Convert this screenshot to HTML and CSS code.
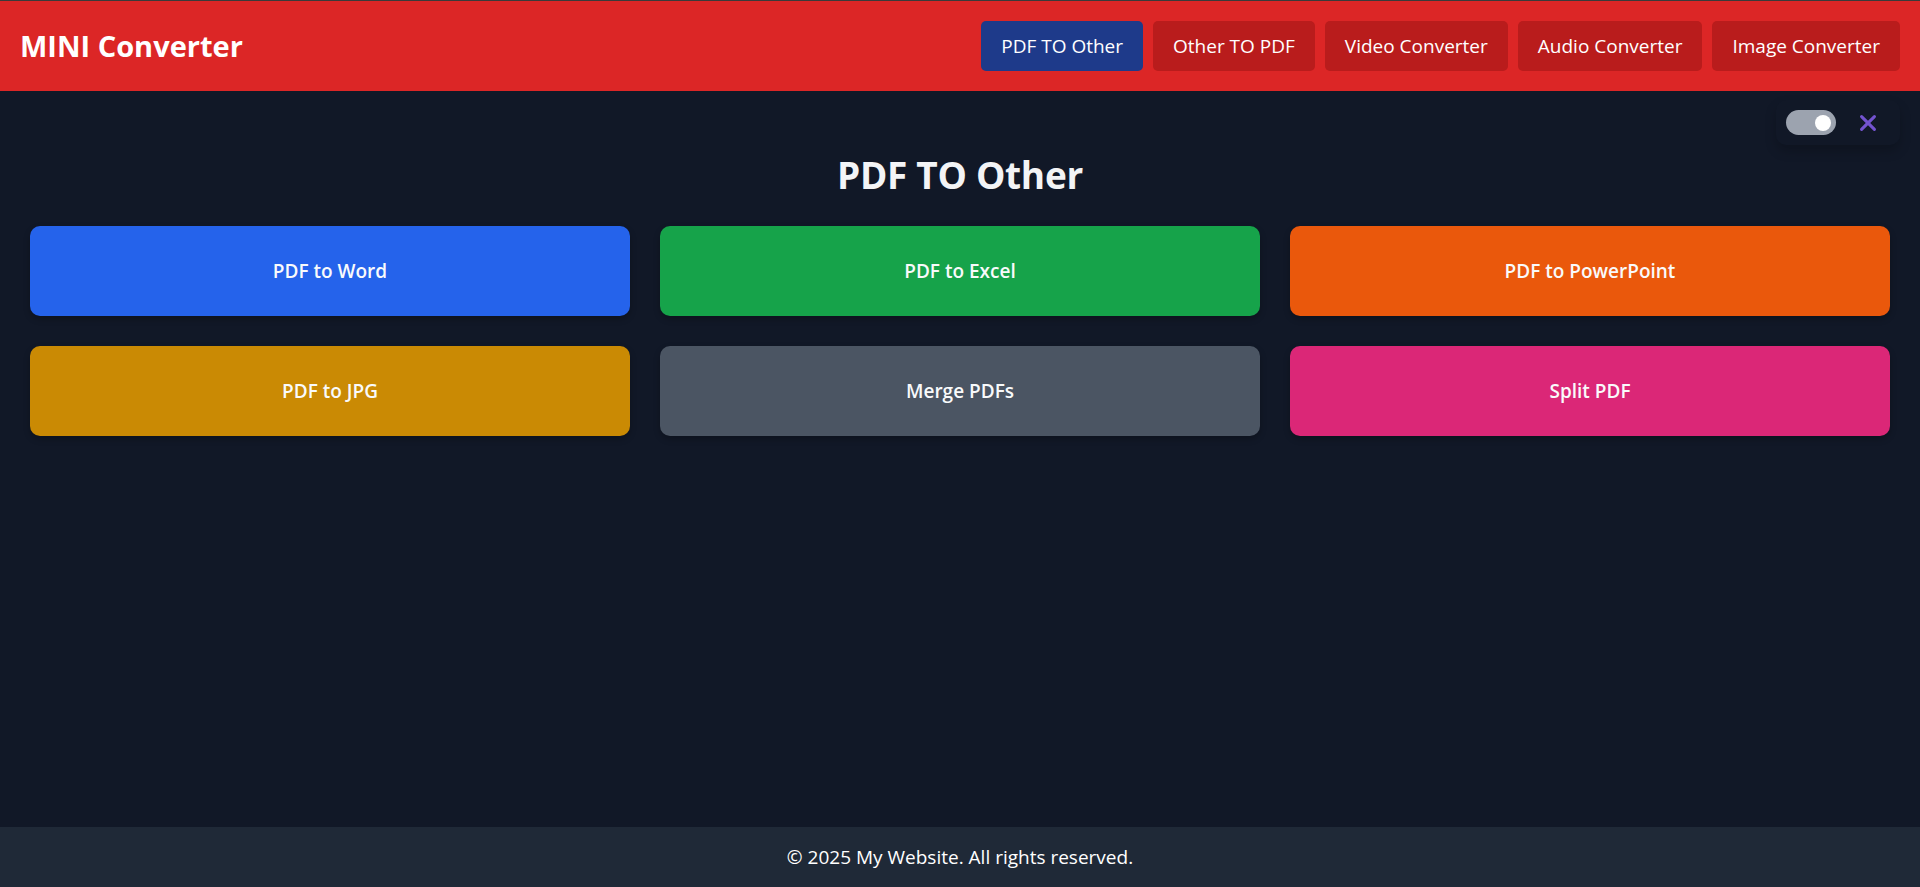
FILE: index.html
```html
<!DOCTYPE html>
<html lang="en">
<head>
<meta charset="utf-8">
<title>MINI Converter</title>
<link rel="stylesheet" href="styles.css">
</head>
<body>
<div class="page">
  <header class="header">
    <div class="logo">MINI Converter</div>
    <nav class="nav">
      <a class="nav-btn active" href="#">PDF TO Other</a>
      <a class="nav-btn" href="#">Other TO PDF</a>
      <a class="nav-btn" href="#">Video Converter</a>
      <a class="nav-btn" href="#">Audio Converter</a>
      <a class="nav-btn" href="#">Image Converter</a>
    </nav>
  </header>

  <div class="controls">
    <span class="toggle"><span class="knob"></span></span>
    <button class="close-btn" aria-label="Close">
      <svg viewBox="0 0 24 24" width="22" height="22"><path d="M5 5 L19 19 M19 5 L5 19" stroke="currentColor" stroke-width="3.4" stroke-linecap="round" fill="none"/></svg>
    </button>
  </div>

  <main class="main">
    <h1 class="title">PDF TO Other</h1>
    <div class="grid">
      <a class="card blue" href="#">PDF to Word</a>
      <a class="card green" href="#">PDF to Excel</a>
      <a class="card orange" href="#">PDF to PowerPoint</a>
      <a class="card yellow" href="#">PDF to JPG</a>
      <a class="card gray" href="#">Merge PDFs</a>
      <a class="card pink" href="#">Split PDF</a>
    </div>
  </main>

  <footer class="footer">© 2025 My Website. All rights reserved.</footer>
</div>
</body>
</html>
```

FILE: styles.css
```css
* { box-sizing: border-box; }
html, body { margin: 0; padding: 0; }
body {
  background: #111827;
  color: #ffffff;
  font-family: "Open Sans", "Noto Sans", sans-serif;
  font-size: 20px;
  line-height: 30px;
}
a { text-decoration: none; color: inherit; }

.page {
  min-height: 100vh;
  display: flex;
  flex-direction: column;
}

.header {
  background: #dc2626;
  border-top: 1px solid #3a3a3a;
  padding: 20px;
  display: flex;
  align-items: center;
  justify-content: space-between;
}
.logo {
  font-size: 29px;
  font-weight: 700;
  line-height: 36px;
}
.nav { display: flex; gap: 10px; }
.nav-btn {
  background: #b91c1c;
  color: #fff;
  padding: 10px 20px;
  border-radius: 5px;
  font-size: 19px;
  line-height: 30px;
}
.nav-btn.active { background: #1e3a8a; }

.controls {
  position: fixed;
  top: 100px;
  right: 20px;
  display: flex;
  align-items: center;
  gap: 20px;
  padding: 10px 20px 10px 10px;
  background: #111827;
  border-radius: 10px;
  box-shadow: 0 6px 12px rgba(0, 0, 0, 0.2);
}
.toggle {
  width: 50px;
  height: 25px;
  border-radius: 13px;
  background: #9ca3af;
  display: flex;
  align-items: center;
  justify-content: flex-end;
  padding-right: 5px;
}
.knob {
  width: 16px;
  height: 16px;
  border-radius: 50%;
  background: #ffffff;
}
.close-btn {
  width: 24px;
  height: 24px;
  padding: 0;
  border: 0;
  background: transparent;
  color: #7353cf;
  display: flex;
  align-items: center;
  justify-content: center;
}

.main {
  flex: 1;
  padding: 30px;
}
.title {
  margin: 31px 0 29px;
  text-align: center;
  font-size: 37px;
  line-height: 45px;
  font-weight: 700;
  color: #f3f4f6;
  letter-spacing: -0.3px;
}
.grid {
  display: grid;
  grid-template-columns: repeat(3, 1fr);
  gap: 30px;
}
.card {
  display: flex;
  align-items: center;
  justify-content: center;
  height: 90px;
  border-radius: 10px;
  font-size: 19px;
  font-weight: 600;
  color: #f9fafb;
  box-shadow: 0 3px 6px rgba(0, 0, 0, 0.25);
}
.blue { background: #2563eb; }
.green { background: #16a34a; }
.orange { background: #ea580c; }
.yellow { background: #ca8a04; }
.gray { background: #4b5563; }
.pink { background: #db2777; }

.footer {
  background: #1f2937;
  text-align: center;
  padding: 15px;
  font-size: 19px;
  line-height: 30px;
  color: #ffffff;
}
```
